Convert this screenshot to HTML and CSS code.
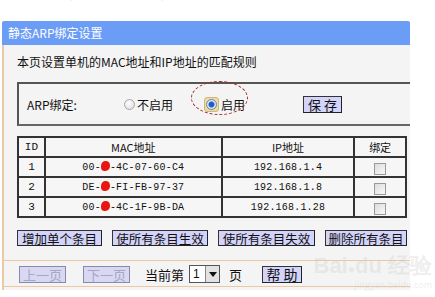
FILE: index.html
```html
<!DOCTYPE html>
<html>
<head>
<meta charset="utf-8">
<link rel="stylesheet" href="styles.css">
</head>
<body>
<div class="topline"><span>设置完成后，点击保存按钮，静态地址绑定列表如下所示</span></div>
<div class="panel">
  <div class="header">静态ARP绑定设置</div>
  <div class="body">
    <div class="intro">本页设置单机的MAC地址和IP地址的匹配规则</div>
    <div class="box">
      <span class="label">ARP绑定:</span>
      <span class="opt opt-off"><span class="radio"></span>不启用</span>
      <span class="opt opt-on"><span class="focus"><span class="radio checked"></span></span>启用<span class="ellipse"></span></span>
      <span class="btn save">保 存</span>
    </div>
    <table class="grid">
      <tr><th class="c-id">ID</th><th class="c-mac">MAC地址</th><th class="c-ip">IP地址</th><th class="c-bind">绑定</th></tr>
      <tr><td>1</td><td class="mono">00-<span class="blob"></span>-4C-07-60-C4</td><td class="mono">192.168.1.4</td><td><span class="chk"></span></td></tr>
      <tr><td>2</td><td class="mono">DE-<span class="blob"></span>-FI-FB-97-37</td><td class="mono">192.168.1.8</td><td><span class="chk"></span></td></tr>
      <tr><td>3</td><td class="mono">00-<span class="blob"></span>-4C-1F-9B-DA</td><td class="mono">192.168.1.28</td><td><span class="chk"></span></td></tr>
    </table>
    <div class="actions">
      <span class="btn act">增加单个条目</span>
      <span class="btn act">使所有条目生效</span>
      <span class="btn act">使所有条目失效</span>
      <span class="btn act">删除所有条目</span>
    </div>
    <div class="pager">
      <span class="btn pg disabled">上一页</span>
      <span class="btn pg disabled">下一页</span>
      <span class="cur">当前第</span>
      <span class="select"><span class="val">1</span><span class="arrow"></span></span>
      <span class="page">页</span>
      <span class="btn help">帮 助</span>
    </div>
  </div>
  <div class="watermark"><span class="wm-big">Bai<span class="paw">●</span>du 经验</span><span class="wm-small">jingyan.baidu.com</span></div>
</div>
</body>
</html>
```
FILE: styles.css
```css
* { box-sizing: border-box; }
body {
  margin: 0;
  background: #fff;
  font-family: "Noto Sans CJK SC", "Liberation Sans", sans-serif;
  color: #111;
  width: 435px;
  height: 297px;
  overflow: hidden;
}
.topline {
  height: 21px;
  overflow: hidden;
  font-size: 13px;
  color: #888;
  padding-left: 4px;
}
.topline span { display: block; margin-top: -16px; line-height: 18px; }
.panel {
  margin-left: 2px;
  width: 408px;
  position: relative;
}
.header {
  height: 24px;
  background: #6b9cf6;
  color: #fff;
  font-size: 12px;
  line-height: 24px;
  padding-left: 6px;
  border-radius: 2px 2px 0 0;
}
.body {
  background: #f4f4f4;
  border-left: 2px solid #e9cba6;
  padding: 8px 0 3px 13px;
}
.intro {
  font-size: 12px;
  line-height: 18px;
  height: 18px;
  margin-bottom: 11px;
}
.box {
  height: 44px;
  border-top: 2px solid #555;
  border-left: 2px solid #555;
  border-bottom: 2px solid #666;
  display: flex;
  align-items: center;
  font-size: 12px;
  padding-left: 8px;
}
.label { width: 97px; }
.opt { display: flex; align-items: center; position: relative; }
.opt-off { width: 80px; }
.radio {
  width: 11px; height: 11px;
  border-radius: 50%;
  border: 1px solid #a8a8a8;
  background: radial-gradient(circle at 40% 35%, #fff, #d8d8d8);
  margin-right: 2px;
  display: inline-block;
}
.radio.checked {
  background: radial-gradient(circle, #1d5ec9 0 2.5px, #dfe8f6 3.5px, #c8d2e0 100%);
  border-color: #6d86a8;
  margin: 0;
}
.focus {
  width: 15px; height: 15px;
  background: #efd9a4;
  border: 1px solid #d2b778;
  border-radius: 3px;
  display: inline-flex;
  align-items: center;
  justify-content: center;
  margin-right: 2px;
}
.opt-on { width: 99px; }
.ellipse {
  position: absolute;
  left: -13px; top: -15px;
  width: 57px; height: 34px;
  border: 1px dashed #a82a2a;
  border-radius: 50%;
}
.btn {
  display: inline-flex;
  align-items: center;
  justify-content: center;
  background: #d4d4fa;
  border: 1px solid #333;
  border-right-color: #222;
  border-bottom-color: #222;
  font-size: 13px;
  height: 17px;
  color: #111;
  white-space: nowrap;
}
.save { width: 39px; }
.grid {
  margin-top: 10px;
  border-collapse: collapse;
  width: 390px;
  font-size: 11px;
  background: #f6f6f6;
}
.grid th, .grid td {
  border: 2px solid #333;
  height: 20px;
  padding: 0;
  text-align: center;
  font-weight: normal;
}
.grid th { font-size: 11px; }
.grid th.c-id, .grid td:first-child { font-family: "Liberation Mono", monospace; }
.c-id { width: 27px; }
.c-mac { width: 178px; }
.c-ip { width: 133px; }
.c-bind { width: 52px; }
.mono { font-family: "Liberation Mono", monospace; font-size: 10px; letter-spacing: 0.2px; }
.blob {
  display: inline-block;
  width: 9px; height: 10px;
  background: #e8160f;
  border-radius: 50% 45% 50% 40%;
  vertical-align: -1px;
}
.chk {
  display: inline-block;
  width: 12px; height: 12px;
  border: 1px solid #999;
  background: linear-gradient(135deg, #dcdcdc, #f8f8f8);
  vertical-align: middle;
}
.actions {
  margin-top: 12px;
  display: flex;
  gap: 10px;
  height: 16px;
  margin-bottom: 14px;
}
.act { height: 16px; font-size: 12.5px; }
.act:nth-child(1) { width: 85px; }
.act:nth-child(2) { width: 96px; }
.act:nth-child(3) { width: 97px; }
.act:nth-child(4) { width: 82px; }
.pager {
  border-top: 1px solid #e9c9a3;
  border-bottom: 1px solid #e9c9a3;
  margin-left: -13px;
  padding: 4px 0 3px 15px;
  display: flex;
  align-items: center;
  font-size: 13px;
  height: 27px;
}
.pg { width: 47px; }
.pg + .pg { margin-left: 17px; }
.disabled { color: #a4a8c8; background: #d8d8f2; border-color: #8a8aa8; }
.cur { margin-left: 15px; width: 44px; }
.select {
  display: inline-flex;
  width: 31px; height: 18px;
  border: 1px solid #555;
  background: #fff;
  font-family: "Liberation Sans", sans-serif;
  font-size: 12px;
  align-items: center;
}
.select .val { flex: 1; padding-left: 3px; }
.select .arrow {
  width: 14px; height: 16px;
  background: #e2e2e2;
  border-left: 1px solid #888;
  position: relative;
}
.select .arrow::after {
  content: "";
  position: absolute;
  left: 3px; top: 6px;
  border-left: 4px solid transparent;
  border-right: 4px solid transparent;
  border-top: 5px solid #111;
}
.page { margin-left: 9px; width: 33px; }
.help { width: 40px; font-size: 14px; }
.watermark {
  position: absolute;
  right: -22px; bottom: 0;
  display: flex;
  flex-direction: column;
  align-items: flex-end;
  color: rgba(200,200,200,0.3);
  pointer-events: none;
}
.wm-big { font-family: "Liberation Sans", sans-serif; font-size: 22px; font-weight: bold; line-height: 22px; }
.paw { font-size: 12px; }
.wm-small { font-size: 9px; line-height: 10px; }
```
